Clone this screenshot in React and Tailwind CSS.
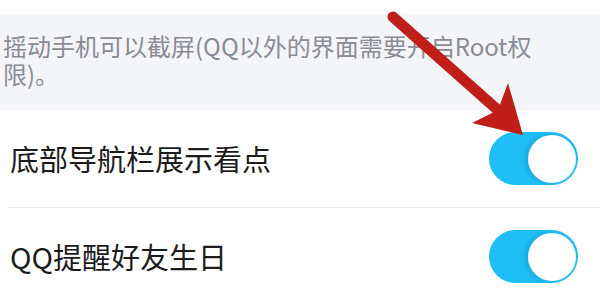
import React from 'react'

const FONT = { fontFamily: '"Noto Sans CJK SC", "Noto Sans", sans-serif' }

function Toggle() {
  return (
    <div className="relative w-[89px] h-[53px] rounded-full bg-[#1ebff6] shrink-0">
      <div className="absolute right-[2px] top-[2.5px] w-[48px] h-[48px] rounded-full bg-white shadow-[-3px_0_5px_rgba(20,120,170,0.35)]" />
    </div>
  )
}

function Row({ label }) {
  return (
    <div className="flex items-center justify-between h-[97px] pl-[10px] pr-[22px]">
      <span className="text-[29px] leading-none text-[#1b1b1b]">{label}</span>
      <Toggle />
    </div>
  )
}

export default function App() {
  return (
    <div className="relative w-[600px] h-[307px] overflow-hidden bg-white" style={FONT}>
      <div className="h-[14px] bg-white" />

      {/* hint block */}
      <div className="h-[96px] bg-[#f4f5f9] pt-[18px] pl-[3px]">
        <p className="max-w-[545px] text-[24px] leading-[27.5px] text-[#8a8b93]">
          摇动手机可以截屏(QQ以外的界面需要开启Root权限)。
        </p>
      </div>

      <Row label="底部导航栏展示看点" />
      <div className="ml-[8px] h-px bg-[#ececee]" />
      <Row label="QQ提醒好友生日" />

      {/* red annotation arrow */}
      <svg className="absolute inset-0 pointer-events-none" width="600" height="307" viewBox="0 0 600 307">
        <line x1="393" y1="17" x2="500" y2="112" stroke="#bf1f18" strokeWidth="11" strokeLinecap="round" />
        <polygon points="523,135 508,83 498,110 472,123" fill="#bf1f18" />
      </svg>
    </div>
  )
}
